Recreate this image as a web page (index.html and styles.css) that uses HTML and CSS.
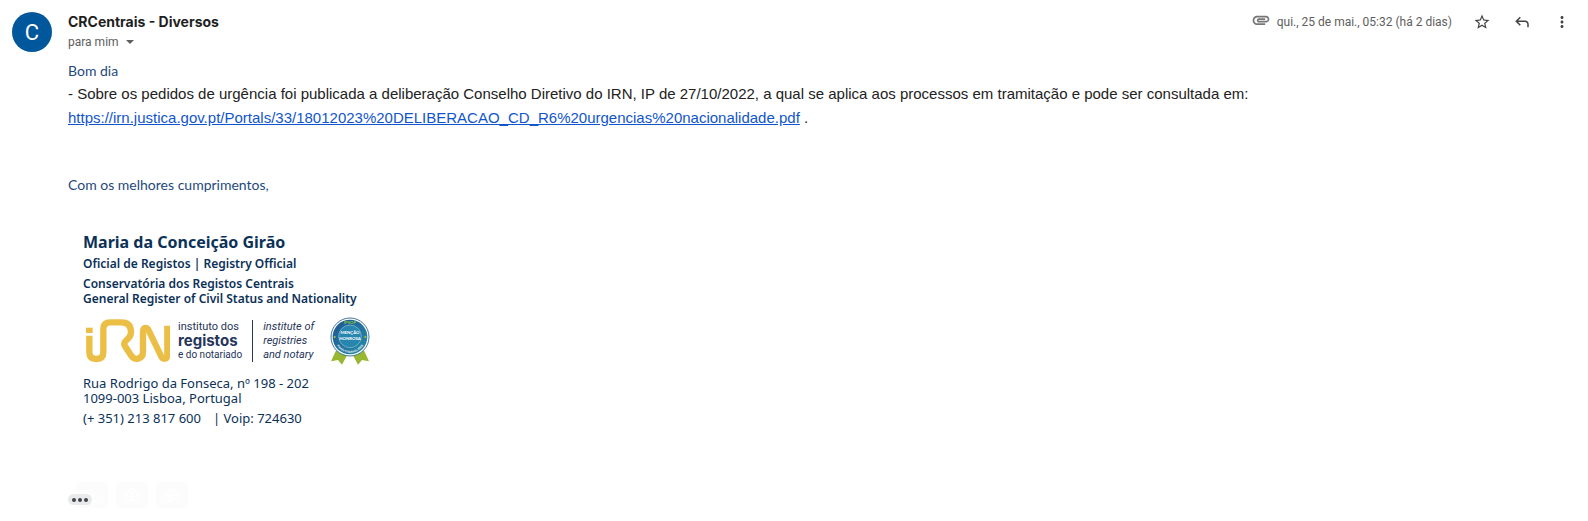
FILE: index.html
```html
<!DOCTYPE html>
<html lang="pt">
<head>
  <meta charset="UTF-8">
  <meta name="viewport" content="width=device-width, initial-scale=1.0">
  <title>CRCentrais - Diversos</title>
  <link rel="stylesheet" href="styles.css">
</head>
<body>
  <article class="message">
    <div class="avatar" aria-hidden="true">C</div>
    <div class="message-main">
      <header class="message-header">
        <div class="sender">
          <h1 class="sender-name">CRCentrais - Diversos</h1>
          <button class="recipient" type="button">
            para mim
            <svg width="8" height="4" viewBox="0 0 8 4"><path d="M0 0h8L4 4z"/></svg>
          </button>
        </div>
        <div class="header-actions">
          <svg class="clip" width="20" height="20" viewBox="0 0 24 24"><path d="M2 12.5C2 9.46 4.46 7 7.5 7H18c2.21 0 4 1.79 4 4s-1.79 4-4 4H9.5C8.12 15 7 13.88 7 12.5S8.12 10 9.5 10H17v2H9.41c-.55 0-.55 1 0 1H18c1.1 0 2-.9 2-2s-.9-2-2-2H7.5C5.57 9 4 10.57 4 12.5S5.57 16 7.5 16H17v2H7.5C4.46 18 2 15.54 2 12.5z"/></svg>
          <span class="date">qui., 25 de mai., 05:32 (há 2 dias)</span>
          <button class="icon-button" type="button" aria-label="Com estrela">
            <svg width="18" height="18" viewBox="0 0 24 24"><path d="M22 9.24l-7.19-.62L12 2 9.19 8.63 2 9.24l5.46 4.73L5.82 21 12 17.27 18.18 21l-1.63-7.03L22 9.24zM12 15.4l-3.76 2.27 1-4.28-3.32-2.88 4.38-.38L12 6.1l1.71 4.04 4.38.38-3.32 2.88 1 4.28L12 15.4z"/></svg>
          </button>
          <button class="icon-button" type="button" aria-label="Responder">
            <svg width="18" height="18" viewBox="0 -960 960 960"><path d="M760-200v-160q0-50-35-85t-85-35H273l144 144-57 56-240-240 240-240 57 56-144 144h367q83 0 141.500 58.500T840-360v160h-80Z"/></svg>
          </button>
          <button class="icon-button" type="button" aria-label="Mais">
            <svg width="18" height="18" viewBox="0 0 24 24"><path d="M12 8c1.100 0 2-.9 2-2s-.9-2-2-2-2 .9-2 2 .9 2 2 2zm0 2c-1.100 0-2 .9-2 2s.9 2 2 2 2-.9 2-2-.9-2-2-2zm0 6c-1.100 0-2 .9-2 2s.9 2 2 2 2-.9 2-2-.9-2-2-2z"/></svg>
          </button>
        </div>
      </header>

      <div class="message-body">
        <p class="greeting">Bom dia</p>
        <p>- Sobre os pedidos de urgência foi publicada a deliberação Conselho Diretivo do IRN, IP de 27/10/2022, a qual se aplica aos processos em tramitação e pode ser consultada em:</p>
        <p><a href="https://irn.justica.gov.pt/Portals/33/18012023%20DELIBERACAO_CD_R6%20urgencias%20nacionalidade.pdf">https://irn.justica.gov.pt/Portals/33/18012023%20DELIBERACAO_CD_R6%20urgencias%20nacionalidade.pdf</a> .</p>
        <p class="closing">Com os melhores cumprimentos,</p>
      </div>

      <!-- Signature -->
      <section class="signature">
        <h2 class="signature-name">Maria da Conceição Girão</h2>
        <p class="signature-role">Oficial de Registos | Registry Official</p>
        <p class="signature-office">Conservatória dos Registos Centrais<br>General Register of Civil Status and Nationality</p>
        <div class="logos">
          <svg class="irn" width="84" height="44" viewBox="0 0 252 132" role="img" aria-label="IRN">
            <path d="M0 26h20v16H0z" fill="#ebbe45"/>
            <path d="M10 50v50q0 20 21 20t21-20V30Q52 10 73 10h33q29 0 29 29 0 11-8 19l-8 8q-8 8-1 17l19 29q8 10 20 7 14-4 14-20V40q0-13 8-13 6 0 10 9l36 75q4 9 11 8 8-1 8-13V20" fill="none" stroke="#ebbe45" stroke-width="19"/>
          </svg>
          <div class="logo-text">
            <span>instituto dos</span>
            <strong>registos</strong>
            <span class="logo-small">e do notariado</span>
          </div>
          <div class="logo-text logo-english">
            <span>institute of</span>
            <span>registries</span>
            <span>and notary</span>
          </div>
          <svg class="badge" width="40" height="48" viewBox="0 0 120 144" role="img" aria-label="Menção Honrosa">
            <defs>
              <linearGradient id="disc" x1="0" y1="0" x2="1" y2="1"><stop offset="0" stop-color="#205493"/><stop offset="1" stop-color="#268fa9"/></linearGradient>
              <path id="arc" d="M13 60a47 47 0 0 0 94 0"/>
            </defs>
            <path d="M21 94L3 133l21-4 12 14 20-37zM99 94l18 39-21-4-12 14-20-37z" fill="#97b830"/>
            <circle cx="60" cy="60" r="57" fill="#fff" stroke="#41759d" stroke-width="3"/>
            <circle cx="60" cy="60" r="52" fill="url(#disc)"/>
            <circle cx="60" cy="58" r="34" fill="#2686ae" stroke="#8cc4d8" stroke-width="2"/>
            <text class="badge-top" x="60" y="22">IPSOP</text>
            <text class="badge-title" x="60" y="52">MENÇÃO</text>
            <text class="badge-title" x="60" y="69">HONROSA</text>
            <text class="badge-ring"><textPath href="#arc" startOffset="50%">Prémio Cidadania 2018</textPath></text>
            <circle cx="14" cy="60" r="3" fill="#a9c83b"/>
            <circle cx="106" cy="60" r="3" fill="#a9c83b"/>
          </svg>
        </div>
        <address class="contact">
          <p>Rua Rodrigo da Fonseca, nº 198 - 202<br>1099-003 Lisboa, Portugal</p>
          <p class="phones"><span>(+ 351) 213 817 600</span><span>| Voip: 724630</span></p>
        </address>
      </section>

      <footer class="message-footer">
        <button class="trimmed" type="button" aria-label="Mostrar conteúdo cortado"><i></i><i></i><i></i></button>
        <div class="image-tools">
          <button type="button" aria-label="Transferir"><svg width="16" height="16" viewBox="0 0 24 24"><path d="M12 3v12M6 10l6 6 6-6M4 21h16"/></svg></button>
          <button type="button" aria-label="Adicionar ao Drive"><svg width="16" height="16" viewBox="0 0 24 24"><path d="M9 3h6l7 12-3 5H5l-3-5zM12 9l-3 6h6z"/></svg></button>
          <button type="button" aria-label="Guardar no Fotos"><svg width="16" height="16" viewBox="0 0 24 24"><path d="M12 12V2q6 0 6 5t-6 5h10q0 6-5 6t-5-6v10q-6 0-6-5t6-5H2q0-6 5-6t5 6"/></svg></button>
        </div>
      </footer>
    </div>
  </article>
</body>
</html>
```
FILE: styles.css
```css
body {
  margin: 0;
  background-color: #fff;
  color: #222;
  font-family: "Liberation Sans", Arial, sans-serif;
  font-size: 15px;
}
h1, h2, p {
  margin: 0;
}
button {
  padding: 0;
  border: 0;
  background: none;
  cursor: pointer;
}
svg {
  display: block;
  flex-shrink: 0;
}
.message {
  display: flex;
  gap: 16px;
  padding: 12px 6px 12px 12px;
}
.avatar {
  display: flex;
  align-items: center;
  justify-content: center;
  flex-shrink: 0;
  width: 40px;
  height: 40px;
  border-radius: 50%;
  background-color: #01579b;
  color: #fff;
  font-family: Roboto, sans-serif;
  font-size: 22px;
}
.message-main {
  flex: 1;
  min-width: 0;
}

/* Header */
.message-header {
  display: flex;
  justify-content: space-between;
}
.sender-name {
  color: #1f1f1f;
  font-family: Inter, sans-serif;
  font-size: 14px;
  font-weight: 700;
  line-height: 20px;
}
.recipient {
  display: flex;
  align-items: center;
  gap: 7px;
  color: #5e5e5e;
  fill: #5e5e5e;
  font-family: Roboto, sans-serif;
  font-size: 12px;
  line-height: 20px;
}
.header-actions {
  display: flex;
  align-items: center;
  height: 20px;
  fill: #444;
}
.clip {
  margin: 0 6px 4px 0;
  fill: #777;
}
.date {
  margin-right: 10px;
  color: #5e5e5e;
  font-family: Roboto, sans-serif;
  font-size: 12px;
}
.icon-button {
  display: flex;
  align-items: center;
  justify-content: center;
  width: 40px;
  height: 40px;
  fill: #444;
}

/* Message text */
.message-body {
  padding-top: 8px;
  line-height: 24px;
}
.message-body a {
  color: #15c;
}
.message-body .greeting,
.message-body .closing {
  color: #1f497d;
  font-family: Lato, sans-serif;
  font-size: 14px;
  line-height: 22px;
}
.message-body .closing {
  margin-top: 44px;
}

/* Signature */
.signature {
  padding: 36px 0 0 15px;
  color: #0b3158;
  font-family: "Noto Sans", sans-serif;
  font-size: 12px;
  line-height: 15px;
}
.signature-name {
  font-size: 16px;
  line-height: 20px;
}
.signature-role {
  margin-top: 4px;
  font-weight: 600;
}
.signature-office {
  margin-top: 5px;
  font-weight: 600;
}
.logos {
  display: flex;
  align-items: center;
  height: 50px;
  margin-top: 10px;
  padding-left: 3px;
}
.logo-text {
  display: flex;
  flex-direction: column;
  margin-left: 8px;
  color: #26355a;
  font-family: Inter, sans-serif;
  font-size: 11px;
  line-height: 14px;
}
.logo-text span {
  font-family: Roboto, sans-serif;
}
.logo-text strong {
  font-size: 15px;
}
.logo-text .logo-small {
  font-size: 10px;
}
.logo-english {
  margin-left: 10px;
  padding: 0 16px 0 10px;
  border-left: 1px solid #26355a;
  font-style: italic;
}
.badge text {
  font-family: Lato, sans-serif;
  font-weight: 700;
  text-anchor: middle;
  fill: #fff;
}
.badge .badge-top {
  font-size: 13px;
  fill: #7fc241;
}
.badge .badge-title {
  font-size: 13px;
}
.badge .badge-ring {
  font-size: 9px;
}
.contact {
  margin-top: 10px;
  font-size: 13px;
  font-style: normal;
}
.phones {
  display: flex;
  gap: 12px;
  margin-top: 5px;
}

/* Footer */
.message-footer {
  display: flex;
  align-items: flex-end;
  margin-top: 56px;
}
.trimmed {
  display: flex;
  align-items: center;
  justify-content: center;
  gap: 2px;
  z-index: 1;
  width: 24px;
  height: 11px;
  margin-bottom: 3px;
  border-radius: 6px;
  background-color: #e8eaed;
}
.trimmed i {
  width: 4px;
  height: 4px;
  border-radius: 50%;
  background-color: #444;
}
.image-tools {
  display: flex;
  gap: 8px;
  margin-left: -16px;
}
.image-tools button {
  display: flex;
  align-items: center;
  justify-content: center;
  width: 32px;
  height: 26px;
  border-radius: 3px;
  background-color: #fcfcfc;
}
.image-tools svg {
  fill: none;
  stroke: #fff;
  stroke-width: 2;
}
```
